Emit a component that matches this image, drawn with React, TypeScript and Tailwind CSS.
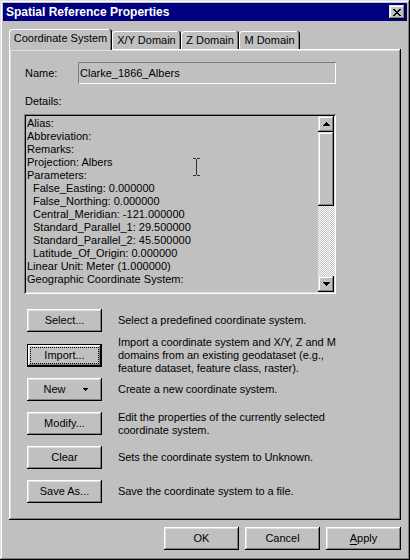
import React from "react";

const RAISED =
  "shadow-[inset_-1px_-1px_#000,inset_1px_1px_#fff,inset_-2px_-2px_#808080,inset_2px_2px_#dfdfdf]";
const RAISED_SB =
  "shadow-[inset_-1px_-1px_#000,inset_1px_1px_#dfdfdf,inset_-2px_-2px_#808080,inset_2px_2px_#fff]";
const DEFAULT_BTN =
  "shadow-[inset_0_0_0_1px_#000,inset_-2px_-2px_#000,inset_2px_2px_#fff,inset_-3px_-3px_#808080,inset_3px_3px_#dfdfdf]";

function Btn({
  children,
  def = false,
}: {
  children: React.ReactNode;
  def?: boolean;
}) {
  return (
    <div
      className={`w-[75px] h-[23px] shrink-0 flex items-center justify-center bg-[#c0c0c0] ${
        def ? DEFAULT_BTN : RAISED
      }`}
    >
      {children}
    </div>
  );
}

function UpArrow() {
  return (
    <svg width="7" height="4" viewBox="0 0 7 4" shapeRendering="crispEdges">
      <path d="M3 0h1v1H3z M2 1h3v1H2z M1 2h5v1H1z M0 3h7v1H0z" fill="#000" />
    </svg>
  );
}

function DownArrow() {
  return (
    <svg width="7" height="4" viewBox="0 0 7 4" shapeRendering="crispEdges">
      <path d="M0 0h7v1H0z M1 1h5v1H1z M2 2h3v1H2z M3 3h1v1H3z" fill="#000" />
    </svg>
  );
}

function Row({
  h,
  mt,
  btn,
  children,
}: {
  h: string;
  mt: string;
  btn: React.ReactNode;
  children: React.ReactNode;
}) {
  return (
    <div className={`flex items-center ${h} ${mt}`}>
      {btn}
      <div className="ml-[16px] leading-[13px] tracking-[-0.05px]">{children}</div>
    </div>
  );
}

export default function App() {
  const lines: [string, boolean][] = [
    ["Alias:", false],
    ["Abbreviation:", false],
    ["Remarks:", false],
    ["Projection: Albers", false],
    ["Parameters:", false],
    ["False_Easting: 0.000000", true],
    ["False_Northing: 0.000000", true],
    ["Central_Meridian: -121.000000", true],
    ["Standard_Parallel_1: 29.500000", true],
    ["Standard_Parallel_2: 45.500000", true],
    ["Latitude_Of_Origin: 0.000000", true],
    ["Linear Unit: Meter (1.000000)", false],
    ["Geographic Coordinate System:", false],
  ];

  return (
    <div className="w-[410px] h-[560px] bg-[#c0c0c0] p-[3px] flex flex-col text-[11px] text-black font-[family-name:'Liberation_Sans',Arial,sans-serif] shadow-[inset_-1px_-1px_#000,inset_1px_1px_#dfdfdf,inset_-2px_-2px_#808080,inset_2px_2px_#fff]">
      {/* Title bar */}
      <div className="h-[18px] shrink-0 bg-[#000080] flex items-center pl-[3px] pr-[2px]">
        <span className="flex-1 text-white font-bold text-[12px] leading-none">
          Spatial Reference Properties
        </span>
        <div
          className={`w-[16px] h-[14px] bg-[#c0c0c0] flex items-center justify-center ${RAISED_SB}`}
        >
          <svg width="8" height="7" viewBox="0 0 8 7" shapeRendering="crispEdges">
            <path
              d="M0 0h2v1H0z M6 0h2v1H6z M1 1h2v1H1z M5 1h2v1H5z M2 2h4v1H2z M3 3h2v1H3z M2 4h4v1H2z M1 5h2v1H1z M5 5h2v1H5z M0 6h2v1H0z M6 6h2v1H6z"
              fill="#000"
            />
          </svg>
        </div>
      </div>

      {/* Tabs */}
      <div className="flex items-end h-[20px] mt-[8px] px-[6px] relative z-10 shrink-0">
        <div className="w-[103px] h-[21px] mb-[-1px] pb-[2px] bg-[#c0c0c0] rounded-t-[3px] flex items-center justify-center shadow-[inset_-1px_0_#000,inset_1px_1px_#fff,inset_-2px_0_#808080]">
          Coordinate System
        </div>
        <div className="w-[69px] h-[18px] bg-[#c0c0c0] rounded-t-[3px] flex items-center justify-center pt-[1px] shadow-[inset_-1px_0_#000,inset_1px_1px_#fff,inset_-2px_0_#808080]">
          X/Y Domain
        </div>
        <div className="w-[58px] h-[18px] bg-[#c0c0c0] rounded-t-[3px] flex items-center justify-center pt-[1px] shadow-[inset_-1px_0_#000,inset_1px_1px_#fff,inset_-2px_0_#808080]">
          Z Domain
        </div>
        <div className="w-[61px] h-[18px] bg-[#c0c0c0] rounded-t-[3px] flex items-center justify-center pt-[1px] shadow-[inset_-1px_0_#000,inset_1px_1px_#fff,inset_-2px_0_#808080]">
          M Domain
        </div>
      </div>

      {/* Panel */}
      <div className="mx-[6px] h-[471px] shrink-0 bg-[#c0c0c0] pt-[13px] pl-[16px] shadow-[inset_-1px_-1px_#000,inset_1px_1px_#fff,inset_-2px_-2px_#808080,inset_2px_2px_#dfdfdf]">
        <div className="flex items-center h-[22px]">
          <span className="w-[53px]">Name:</span>
          <div className="w-[258px] h-[22px] flex items-center pl-[2px] shadow-[inset_1px_1px_#808080,inset_-1px_-1px_#fff]">
            Clarke_1866_Albers
          </div>
        </div>
        <div className="mt-[11px] leading-[13px]">Details:</div>

        <div className="relative mt-[6px] ml-[-1px] w-[312px] h-[180px] p-[2px] flex shadow-[inset_1px_1px_#808080,inset_-1px_-1px_#fff,inset_2px_2px_#000,inset_-2px_-2px_#dfdfdf]">
          <div className="flex-1 pl-[1px] pt-[1px] leading-[13px] whitespace-nowrap overflow-hidden">
            {lines.map(([t, indent], i) => (
              <div key={i} className={indent ? "pl-[6px]" : ""}>
                {t}
              </div>
            ))}
          </div>
          <div className="w-[16px] h-[176px] flex flex-col">
            <div className={`h-[16px] shrink-0 flex items-center justify-center ${RAISED_SB}`}>
              <UpArrow />
            </div>
            <div className={`h-[74px] shrink-0 ${RAISED_SB}`} />
            <div className="flex-1 min-h-0 relative overflow-hidden">
              <svg className="absolute inset-0 w-full h-full" shapeRendering="crispEdges">
                <defs>
                  <pattern id="dither" width="2" height="2" patternUnits="userSpaceOnUse">
                    <rect width="2" height="2" fill="#c0c0c0" />
                    <rect width="1" height="1" fill="#fff" />
                    <rect x="1" y="1" width="1" height="1" fill="#fff" />
                  </pattern>
                </defs>
                <rect width="100%" height="100%" fill="url(#dither)" />
              </svg>
            </div>
            <div className={`h-[16px] shrink-0 flex items-center justify-center ${RAISED_SB}`}>
              <DownArrow />
            </div>
          </div>
          {/* I-beam mouse cursor */}
          <svg
            width="7"
            height="18"
            viewBox="0 0 7 18"
            shapeRendering="crispEdges"
            className="absolute left-[169px] top-[44px]"
          >
            <path
              d="M0 0h3v1H0z M4 0h3v1H4z M3 1h1v16H3z M0 17h3v1H0z M4 17h3v1H4z"
              fill="#333"
            />
          </svg>
        </div>

        <div className="mt-[15px] ml-[2px] flex flex-col">
          <Row h="h-[23px]" mt="" btn={<Btn>Select...</Btn>}>
            Select a predefined coordinate system.
          </Row>
          <Row
            h="h-[46px]"
            mt=""
            btn={
              <Btn def>
                <div className="w-[69px] h-[17px] border border-dotted border-black flex items-center justify-center">
                  Import...
                </div>
              </Btn>
            }
          >
            Import a coordinate system and X/Y, Z and M
            <br />
            domains from an existing geodataset (e.g.,
            <br />
            feature dataset, feature class, raster).
          </Row>
          <Row
            h="h-[23px]"
            mt=""
            btn={
              <Btn>
                <span className="ml-[2px]">New</span>
                <svg width="5" height="3" viewBox="0 0 5 3" shapeRendering="crispEdges" className="ml-[17px]">
                  <path d="M0 0h5v1H0z M1 1h3v1H1z M2 2h1v1H2z" fill="#000" />
                </svg>
              </Btn>
            }
          >
            Create a new coordinate system.
          </Row>
          <Row h="h-[23px]" mt="mt-[11px]" btn={<Btn>Modify...</Btn>}>
            Edit the properties of the currently selected
            <br />
            coordinate system.
          </Row>
          <Row h="h-[23px]" mt="mt-[11px]" btn={<Btn>Clear</Btn>}>
            Sets the coordinate system to Unknown.
          </Row>
          <Row h="h-[23px]" mt="mt-[11px]" btn={<Btn>Save As...</Btn>}>
            Save the coordinate system to a file.
          </Row>
        </div>
      </div>

      {/* Bottom buttons */}
      <div className="flex justify-end gap-[6px] mt-[7px] px-[6px] shrink-0">
        <Btn>OK</Btn>
        <Btn>Cancel</Btn>
        <Btn>
          <span>
            <span className="underline underline-offset-[2px]">A</span>pply
          </span>
        </Btn>
      </div>
    </div>
  );
}
